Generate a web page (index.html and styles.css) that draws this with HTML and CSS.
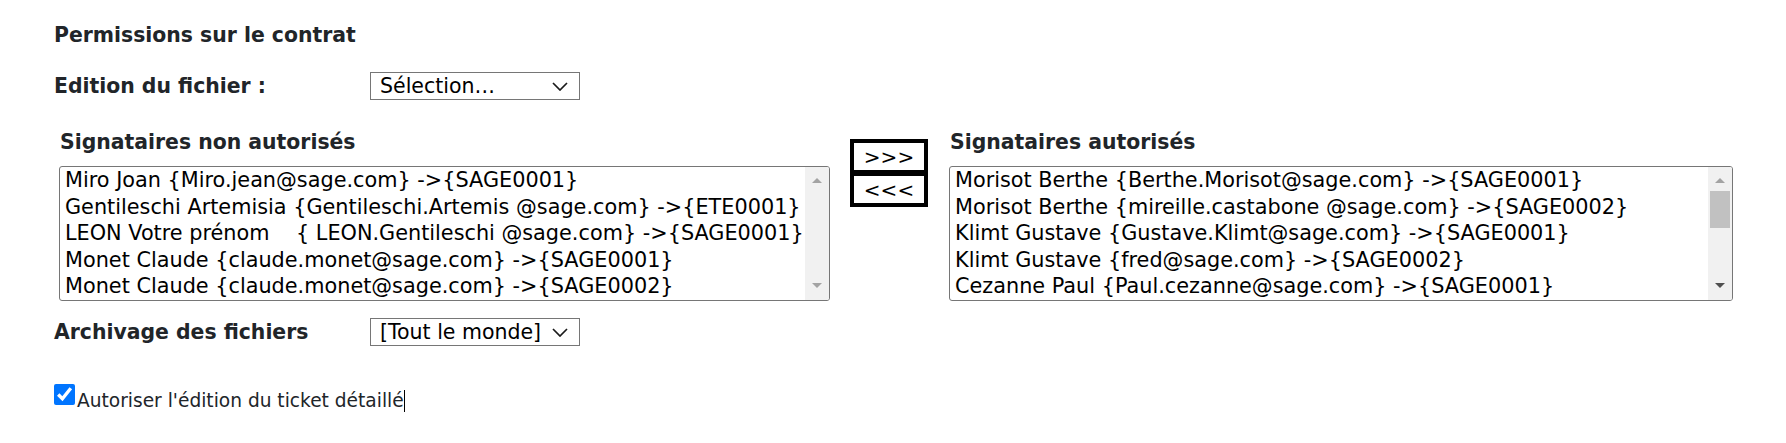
FILE: index.html
```html
<!DOCTYPE html>
<html lang="fr">
<head>
<meta charset="utf-8">
<title>Permissions sur le contrat</title>
<link rel="stylesheet" href="styles.css">
</head>
<body>
<div class="page">
  <h3 class="title">Permissions sur le contrat</h3>

  <div class="field-row row-edition">
    <label class="field-label">Edition du fichier :</label>
    <div class="select">
      <span class="select-value">Sélection…</span>
      <svg class="chev" width="16" height="9" viewBox="0 0 16 9"><path d="M1 1 L8 8 L15 1" fill="none" stroke="#1a1a1a" stroke-width="1.7"/></svg>
    </div>
  </div>

  <div class="lists">
    <div class="list-col list-col-left">
      <div class="list-title">Signataires non autorisés</div>
      <div class="listbox">
        <div class="options">
          <div class="opt">Miro Joan {Miro.jean@sage.com} -&gt;{SAGE0001}</div>
          <div class="opt">Gentileschi Artemisia {Gentileschi.Artemis @sage.com} -&gt;{ETE0001}</div>
          <div class="opt">LEON Votre prénom    { LEON.Gentileschi @sage.com} -&gt;{SAGE0001}</div>
          <div class="opt">Monet Claude {claude.monet@sage.com} -&gt;{SAGE0001}</div>
          <div class="opt">Monet Claude {claude.monet@sage.com} -&gt;{SAGE0002}</div>
        </div>
        <div class="scrollbar">
          <div class="sb-up"><svg width="10" height="5" viewBox="0 0 10 5"><path d="M0 5 L5 0 L10 5 Z" fill="#a3a3a3"/></svg></div>
          <div class="sb-track"></div>
          <div class="sb-down"><svg width="10" height="5" viewBox="0 0 10 5"><path d="M0 0 L10 0 L5 5 Z" fill="#a3a3a3"/></svg></div>
        </div>
      </div>
    </div>

    <div class="move-btns">
      <button class="move-btn">&gt;&gt;&gt;</button>
      <button class="move-btn move-btn-back">&lt;&lt;&lt;</button>
    </div>

    <div class="list-col list-col-right">
      <div class="list-title">Signataires autorisés</div>
      <div class="listbox">
        <div class="options">
          <div class="opt">Morisot Berthe {Berthe.Morisot@sage.com} -&gt;{SAGE0001}</div>
          <div class="opt">Morisot Berthe {mireille.castabone @sage.com} -&gt;{SAGE0002}</div>
          <div class="opt">Klimt Gustave {Gustave.Klimt@sage.com} -&gt;{SAGE0001}</div>
          <div class="opt">Klimt Gustave {fred@sage.com} -&gt;{SAGE0002}</div>
          <div class="opt">Cezanne Paul {Paul.cezanne@sage.com} -&gt;{SAGE0001}</div>
        </div>
        <div class="scrollbar">
          <div class="sb-up"><svg width="10" height="5" viewBox="0 0 10 5"><path d="M0 5 L5 0 L10 5 Z" fill="#a3a3a3"/></svg></div>
          <div class="sb-track"><div class="sb-thumb"></div></div>
          <div class="sb-down"><svg width="10" height="5" viewBox="0 0 10 5"><path d="M0 0 L10 0 L5 5 Z" fill="#505050"/></svg></div>
        </div>
      </div>
    </div>
  </div>

  <div class="field-row row-archive">
    <label class="field-label">Archivage des fichiers</label>
    <div class="select">
      <span class="select-value">[Tout le monde]</span>
      <svg class="chev" width="16" height="9" viewBox="0 0 16 9"><path d="M1 1 L8 8 L15 1" fill="none" stroke="#1a1a1a" stroke-width="1.7"/></svg>
    </div>
  </div>

  <div class="check-row">
    <input type="checkbox" class="check" checked>
    <span class="check-label">Autoriser l'édition du ticket détaillé<span class="caret"></span></span>
  </div>
</div>
</body>
</html>
```

FILE: styles.css
```css
html, body {
  margin: 0;
  padding: 0;
  background: #ffffff;
}

body {
  font-family: "DejaVu Sans", Verdana, sans-serif;
  color: #000;
}

.page {
  padding: 23px 0 0 54px;
}

.title {
  margin: 0;
  font-size: 20.4px;
  line-height: 24px;
  font-weight: bold;
  color: #212529;
}

.field-row {
  display: flex;
  align-items: baseline;
}

.row-edition {
  margin-top: 25px;
}

.row-archive {
  margin-top: 17px;
}

.field-label {
  width: 316px;
  font-size: 20.4px;
  line-height: 24px;
  font-weight: bold;
  color: #212529;
}

.select {
  width: 210px;
  height: 28px;
  box-sizing: border-box;
  border: 1px solid #767676;
  display: flex;
  align-items: center;
  justify-content: space-between;
  padding: 0 11px 0 9px;
}

.select-value {
  font-size: 20.5px;
  line-height: 24px;
  color: #000;
  white-space: nowrap;
}

.chev {
  display: block;
  flex: none;
}

.lists {
  display: flex;
  align-items: flex-start;
  margin: 30px 0 0 5px;
}

.list-col-left {
  width: 771px;
}

.list-col-right {
  width: 784px;
}

.list-title {
  font-size: 20.4px;
  line-height: 24px;
  font-weight: bold;
  color: #212529;
  padding-left: 1px;
}

.listbox {
  margin-top: 12px;
  height: 135px;
  box-sizing: border-box;
  border: 1px solid #767676;
  border-radius: 3px;
  display: flex;
  overflow: hidden;
}

.options {
  flex: 1;
  padding-left: 5px;
  overflow: hidden;
}

.opt {
  font-size: 20.8px;
  line-height: 26.6px;
  white-space: pre;
  color: #000;
}

.scrollbar {
  width: 24px;
  flex: none;
  background: #f1f1f1;
  display: flex;
  flex-direction: column;
}

.sb-up {
  height: 24px;
  display: flex;
  justify-content: center;
  align-items: flex-start;
  padding-top: 11px;
  box-sizing: border-box;
}

.sb-track {
  flex: 1;
  padding: 0 2px;
}

.sb-thumb {
  height: 37px;
  background: #c1c1c1;
}

.sb-down {
  height: 21px;
  display: flex;
  justify-content: center;
  align-items: flex-start;
  padding-top: 4px;
  box-sizing: border-box;
}

.sb-up svg, .sb-down svg {
  display: block;
}

.move-btns {
  display: flex;
  flex-direction: column;
  width: 78px;
  margin: 9px 21px 0 20px;
}

.move-btn {
  height: 35px;
  box-sizing: border-box;
  border: 4px solid #000;
  background: #fff;
  font-family: "DejaVu Sans", Verdana, sans-serif;
  font-size: 20px;
  line-height: 20px;
  color: #000;
  padding: 0;
  border-radius: 0;
}

.move-btn-back {
  margin-top: -2px;
}

.check-row {
  display: flex;
  align-items: flex-start;
  margin-top: 38px;
}

.check {
  width: 21px;
  height: 21px;
  margin: 0 2px 0 0;
}

.check-label {
  padding-top: 6px;
  font-size: 18.6px;
  line-height: 22px;
  color: #212529;
  white-space: nowrap;
}

.caret {
  display: inline-block;
  width: 1px;
  height: 22px;
  background: #000;
  vertical-align: -5px;
}
```
